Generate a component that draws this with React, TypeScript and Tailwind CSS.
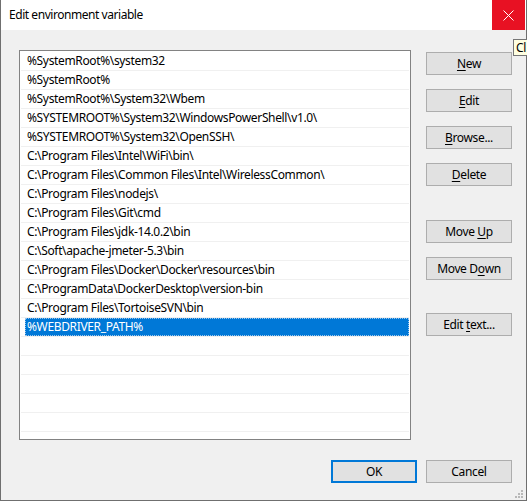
import React from "react";

const rows = [
  "%SystemRoot%\\system32",
  "%SystemRoot%",
  "%SystemRoot%\\System32\\Wbem",
  "%SYSTEMROOT%\\System32\\WindowsPowerShell\\v1.0\\",
  "%SYSTEMROOT%\\System32\\OpenSSH\\",
  "C:\\Program Files\\Intel\\WiFi\\bin\\",
  "C:\\Program Files\\Common Files\\Intel\\WirelessCommon\\",
  "C:\\Program Files\\nodejs\\",
  "C:\\Program Files\\Git\\cmd",
  "C:\\Program Files\\jdk-14.0.2\\bin",
  "C:\\Soft\\apache-jmeter-5.3\\bin",
  "C:\\Program Files\\Docker\\Docker\\resources\\bin",
  "C:\\ProgramData\\DockerDesktop\\version-bin",
  "C:\\Program Files\\TortoiseSVN\\bin",
  "%WEBDRIVER_PATH%",
  "",
  "",
  "",
  "",
  "",
];

function Btn({
  children,
  className = "",
  primary = false,
}: {
  children: React.ReactNode;
  className?: string;
  primary?: boolean;
}) {
  return (
    <div
      className={
        "flex h-[23px] w-[86px] items-center justify-center bg-[#e1e1e1] text-[12px] leading-none text-black " +
        (primary ? "border-2 border-[#0078d7] " : "border border-[#adadad] ") +
        className
      }
    >
      {children}
    </div>
  );
}

function U({ children }: { children: React.ReactNode }) {
  return <span className="underline decoration-1 underline-offset-[2px]">{children}</span>;
}

export default function App() {
  return (
    <div
      className="relative h-[501px] w-[527px] overflow-hidden bg-white tracking-[-0.35px]"
      style={{ fontFamily: '"Noto Sans", "Open Sans", sans-serif' }}
    >
      <div className="flex h-[501px] w-[527px] flex-col border-x border-b border-[#6f6f6f]">
        {/* Title bar */}
        <div className="flex h-[30px] shrink-0 items-center bg-white">
          <div className="flex-1 pl-[8px] text-[12px] leading-none text-black tracking-[-0.45px]">
            Edit environment variable
          </div>
          <div className="mr-[1px] flex h-[30px] w-[33px] items-center justify-center bg-[#e81123]">
            <svg width="11" height="11" viewBox="0 0 11 11">
              <path d="M0.5 0.5 L10.5 10.5 M10.5 0.5 L0.5 10.5" stroke="white" strokeWidth="1" />
            </svg>
          </div>
        </div>

        {/* Body */}
        <div className="relative flex flex-1 flex-col bg-[#f0f0f0] pl-[18px] pt-[20px]">
          <div className="flex gap-[15px]">
            {/* List */}
            <div className="h-[390px] w-[392px] overflow-hidden border border-[#828282] bg-white pt-[1px]">
              {rows.map((r, i) => {
                const selected = i === 14;
                return (
                  <div key={i} className="mx-[1px] flex h-[19px] border-b border-[#f0f0f0]">
                    {selected ? (
                      <div className="ml-[4px] flex h-[18px] flex-1 items-center border border-dotted border-[#9cc6ec] bg-[#0078d7] pl-[1px] text-[12px] leading-none text-white">
                        {r}
                      </div>
                    ) : (
                      <div className="ml-[6px] flex h-[18px] flex-1 items-center text-[12px] leading-none text-black">
                        {r}
                      </div>
                    )}
                  </div>
                );
              })}
            </div>

            {/* Side buttons */}
            <div className="mt-[2px] flex flex-col">
              <Btn>
                <U>N</U>ew
              </Btn>
              <Btn className="mt-[14px]">
                <U>E</U>dit
              </Btn>
              <Btn className="mt-[14px]">
                <U>B</U>rowse...
              </Btn>
              <Btn className="mt-[14px]">
                <U>D</U>elete
              </Btn>
              <Btn className="mt-[34px]">
                Move&nbsp;<U>U</U>p
              </Btn>
              <Btn className="mt-[14px]">
                Move&nbsp;D<U>o</U>wn
              </Btn>
              <Btn className="mt-[33px]">
                Edit&nbsp;<U>t</U>ext...
              </Btn>
            </div>
          </div>

          {/* Bottom buttons */}
          <div className="mt-[20px] flex justify-end gap-[9px] pr-[14px]">
            <Btn primary>OK</Btn>
            <Btn>Cancel</Btn>
          </div>

          {/* Resize grip */}
          <svg className="absolute bottom-[1px] right-[2px]" width="10" height="10" viewBox="0 0 10 10">
            <g fill="#b8b8b8">
              <rect x="7" y="1" width="2" height="2" />
              <rect x="4" y="4" width="2" height="2" />
              <rect x="7" y="4" width="2" height="2" />
              <rect x="1" y="7" width="2" height="2" />
              <rect x="4" y="7" width="2" height="2" />
              <rect x="7" y="7" width="2" height="2" />
            </g>
          </svg>
        </div>
      </div>

      {/* Tooltip partially visible */}
      <div className="absolute left-[513px] top-[39px] flex h-[17px] w-[14px] items-center overflow-hidden border-y border-l border-[#767676] bg-[#ffffe1] pl-[2px] text-[12px] leading-none text-black">
        Cl
      </div>
    </div>
  );
}
